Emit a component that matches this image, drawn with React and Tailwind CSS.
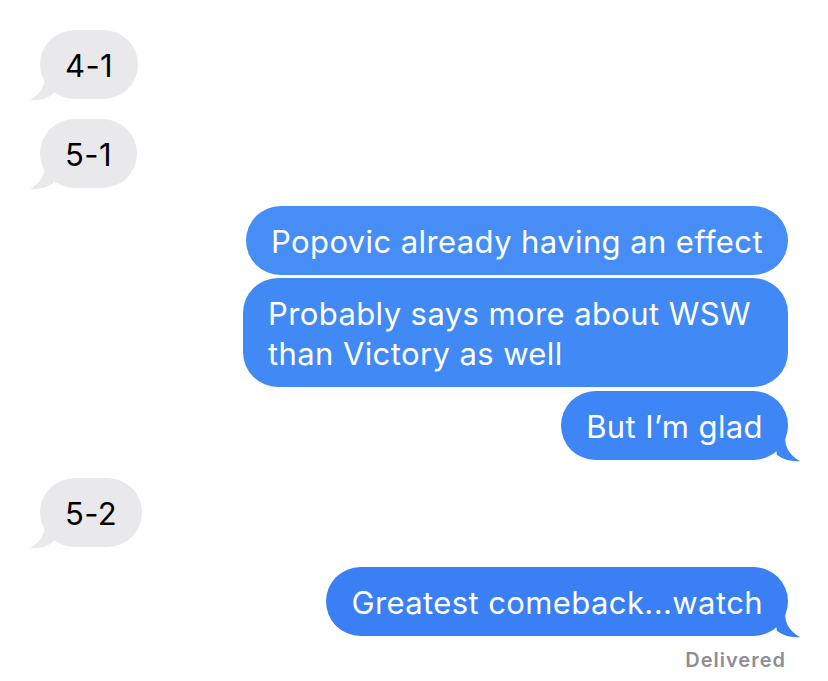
import React from 'react';

const messages = [
  { from: 'them', text: '4-1', gap: 'mt-0' },
  { from: 'them', text: '5-1', gap: 'mt-[20px]' },
  { from: 'me', text: 'Popovic already having an effect', gap: 'mt-[18px]', bg: 'bg-[#468ef6]' },
  { from: 'me', text: 'Probably says more about WSW than Victory as well', gap: 'mt-[3px]', bg: 'bg-[#4189f5]', wide: true },
  { from: 'me', text: 'But I’m glad', gap: 'mt-[4px]', bg: 'bg-[#3e85f5]', tail: '#3e85f5' },
  { from: 'them', text: '5-2', gap: 'mt-[18px]' },
  { from: 'me', text: 'Greatest comeback...watch', gap: 'mt-[20px]', bg: 'bg-[#3a7ff4]', tail: '#3a7ff4' },
];

function TailRight({ color }) {
  return (
    <svg className="absolute -right-[13px] -bottom-[2px]" width="26" height="26" viewBox="0 0 26 26">
      <path d="M10 0 C10 11 14 19 25 25 C17 26 9 24 2 19 L0 8 Z" fill={color} />
    </svg>
  );
}

function TailLeft() {
  return (
    <svg className="absolute -left-[11px] -bottom-[2px]" width="26" height="26" viewBox="0 0 26 26">
      <path d="M16 0 C16 11 12 19 1 25 C9 26 17 24 24 19 L26 8 Z" fill="#e9e9eb" />
    </svg>
  );
}

function Bubble({ msg }) {
  if (msg.from === 'them') {
    return (
      <div className={`flex justify-start ${msg.gap}`}>
        <div className="relative bg-[#e9e9eb] rounded-[35px] px-[25px] pt-[15.5px] pb-[13.5px] text-black text-[31px] leading-[40px]">
          <TailLeft />
          <span className="relative">{msg.text}</span>
        </div>
      </div>
    );
  }
  return (
    <div className={`flex justify-end ${msg.gap}`}>
      <div
        className={`relative ${msg.bg} rounded-[35px] px-[25px] pt-[15.5px] pb-[13.5px] text-white text-[31px] leading-[40px] ${msg.wide ? 'w-[545px]' : ''}`}
      >
        {msg.tail && <TailRight color={msg.tail} />}
        <span className="relative">{msg.text}</span>
      </div>
    </div>
  );
}

export default function App() {
  return (
    <div className="w-[828px] h-[681px] bg-white overflow-hidden px-10 pt-[30px] font-['Inter','Noto_Sans',sans-serif] tracking-[0.4px]">
      {messages.map((m, i) => (
        <Bubble key={i} msg={m} />
      ))}
      <div className="flex justify-end mt-[12px] pr-[2px]">
        <span className="text-[20px] leading-[24px] font-semibold tracking-[1px] text-[#8e8e93]">Delivered</span>
      </div>
    </div>
  );
}
